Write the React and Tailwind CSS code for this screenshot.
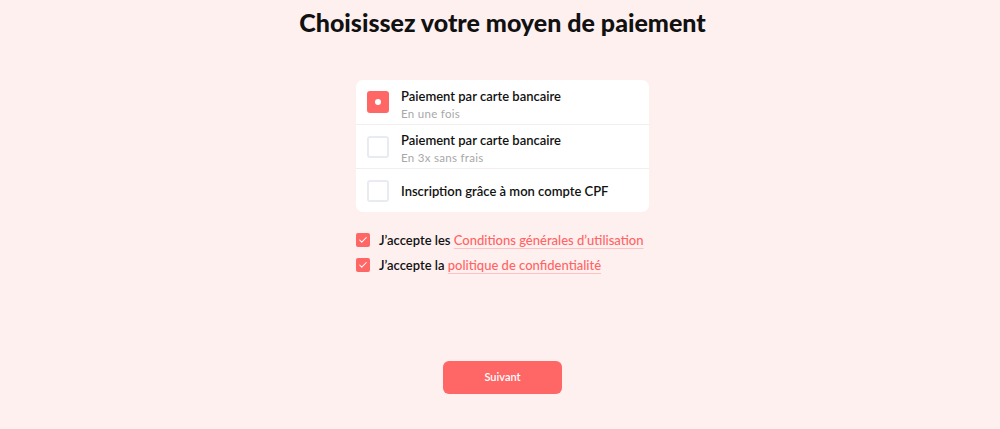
import { Check } from 'lucide-react'

const options = [
  { id: 1, title: 'Paiement par carte bancaire', sub: 'En une fois' },
  { id: 2, title: 'Paiement par carte bancaire', sub: 'En 3x sans frais' },
  { id: 3, title: 'Inscription grâce à mon compte CPF' },
]

export default function App() {
  const selected = 1

  return (
    <main className="min-h-[429px] bg-[#fff0f0] flex flex-col items-center pl-[5px] font-['Lato','Noto_Sans',sans-serif] text-[#111]">
      <h1 className="mt-[6px] text-[25px] leading-[32px] font-black tracking-[0px]">Choisissez votre moyen de paiement</h1>

      <div className="mt-[42px] w-[293px] bg-white rounded-[7px] flex flex-col">
        {options.map((o, i) => (
          <div
            key={o.id}
            className={`h-[44px] flex items-center pl-[11px] gap-[12px] ${i > 0 ? 'border-t border-[#f3eeee]' : ''}`}
          >
            {selected === o.id ? (
              <div className="w-[22px] h-[22px] rounded-[3px] bg-[#ff6666] flex items-center justify-center">
                <div className="w-[6px] h-[6px] rounded-full bg-white" />
              </div>
            ) : (
              <div className="w-[22px] h-[22px] rounded-[3px] border-2 border-[#e8ecf2] bg-white" />
            )}
            <div className={`flex flex-col ${o.sub ? 'pt-[4px]' : 'pt-[1px]'}`}>
              <span className="text-[13px] leading-[17px] font-semibold">{o.title}</span>
              {o.sub && <span className="text-[11.5px] leading-[15px] tracking-[0.3px] text-[#a8a8a8] mt-[1px]">{o.sub}</span>}
            </div>
          </div>
        ))}
      </div>

      <div className="mt-[21px] w-[293px] flex flex-col gap-[11px]">
        <label className="flex items-center gap-[9px] text-[13px] leading-[14px] font-semibold">
          <span className="w-[14px] h-[14px] rounded-[2px] bg-[#ff6666] flex items-center justify-center">
            <Check size={10} strokeWidth={2.5} className="text-white" />
          </span>
          <span>
            J’accepte les{' '}
            <a className="text-[#ff6464] font-medium underline decoration-[#ffc2c2] underline-offset-[3px]">Conditions générales d’utilisation</a>
          </span>
        </label>
        <label className="flex items-center gap-[9px] text-[13px] leading-[14px] font-semibold">
          <span className="w-[14px] h-[14px] rounded-[2px] bg-[#ff6666] flex items-center justify-center">
            <Check size={10} strokeWidth={2.5} className="text-white" />
          </span>
          <span>
            J’accepte la{' '}
            <a className="text-[#ff6464] font-medium underline decoration-[#ffc2c2] underline-offset-[3px]">politique de confidentialité</a>
          </span>
        </label>
      </div>

      <button className="mt-[89px] w-[119px] h-[33px] rounded-[6px] bg-[#ff6666] text-white text-[11px] font-semibold">
        Suivant
      </button>
    </main>
  )
}
